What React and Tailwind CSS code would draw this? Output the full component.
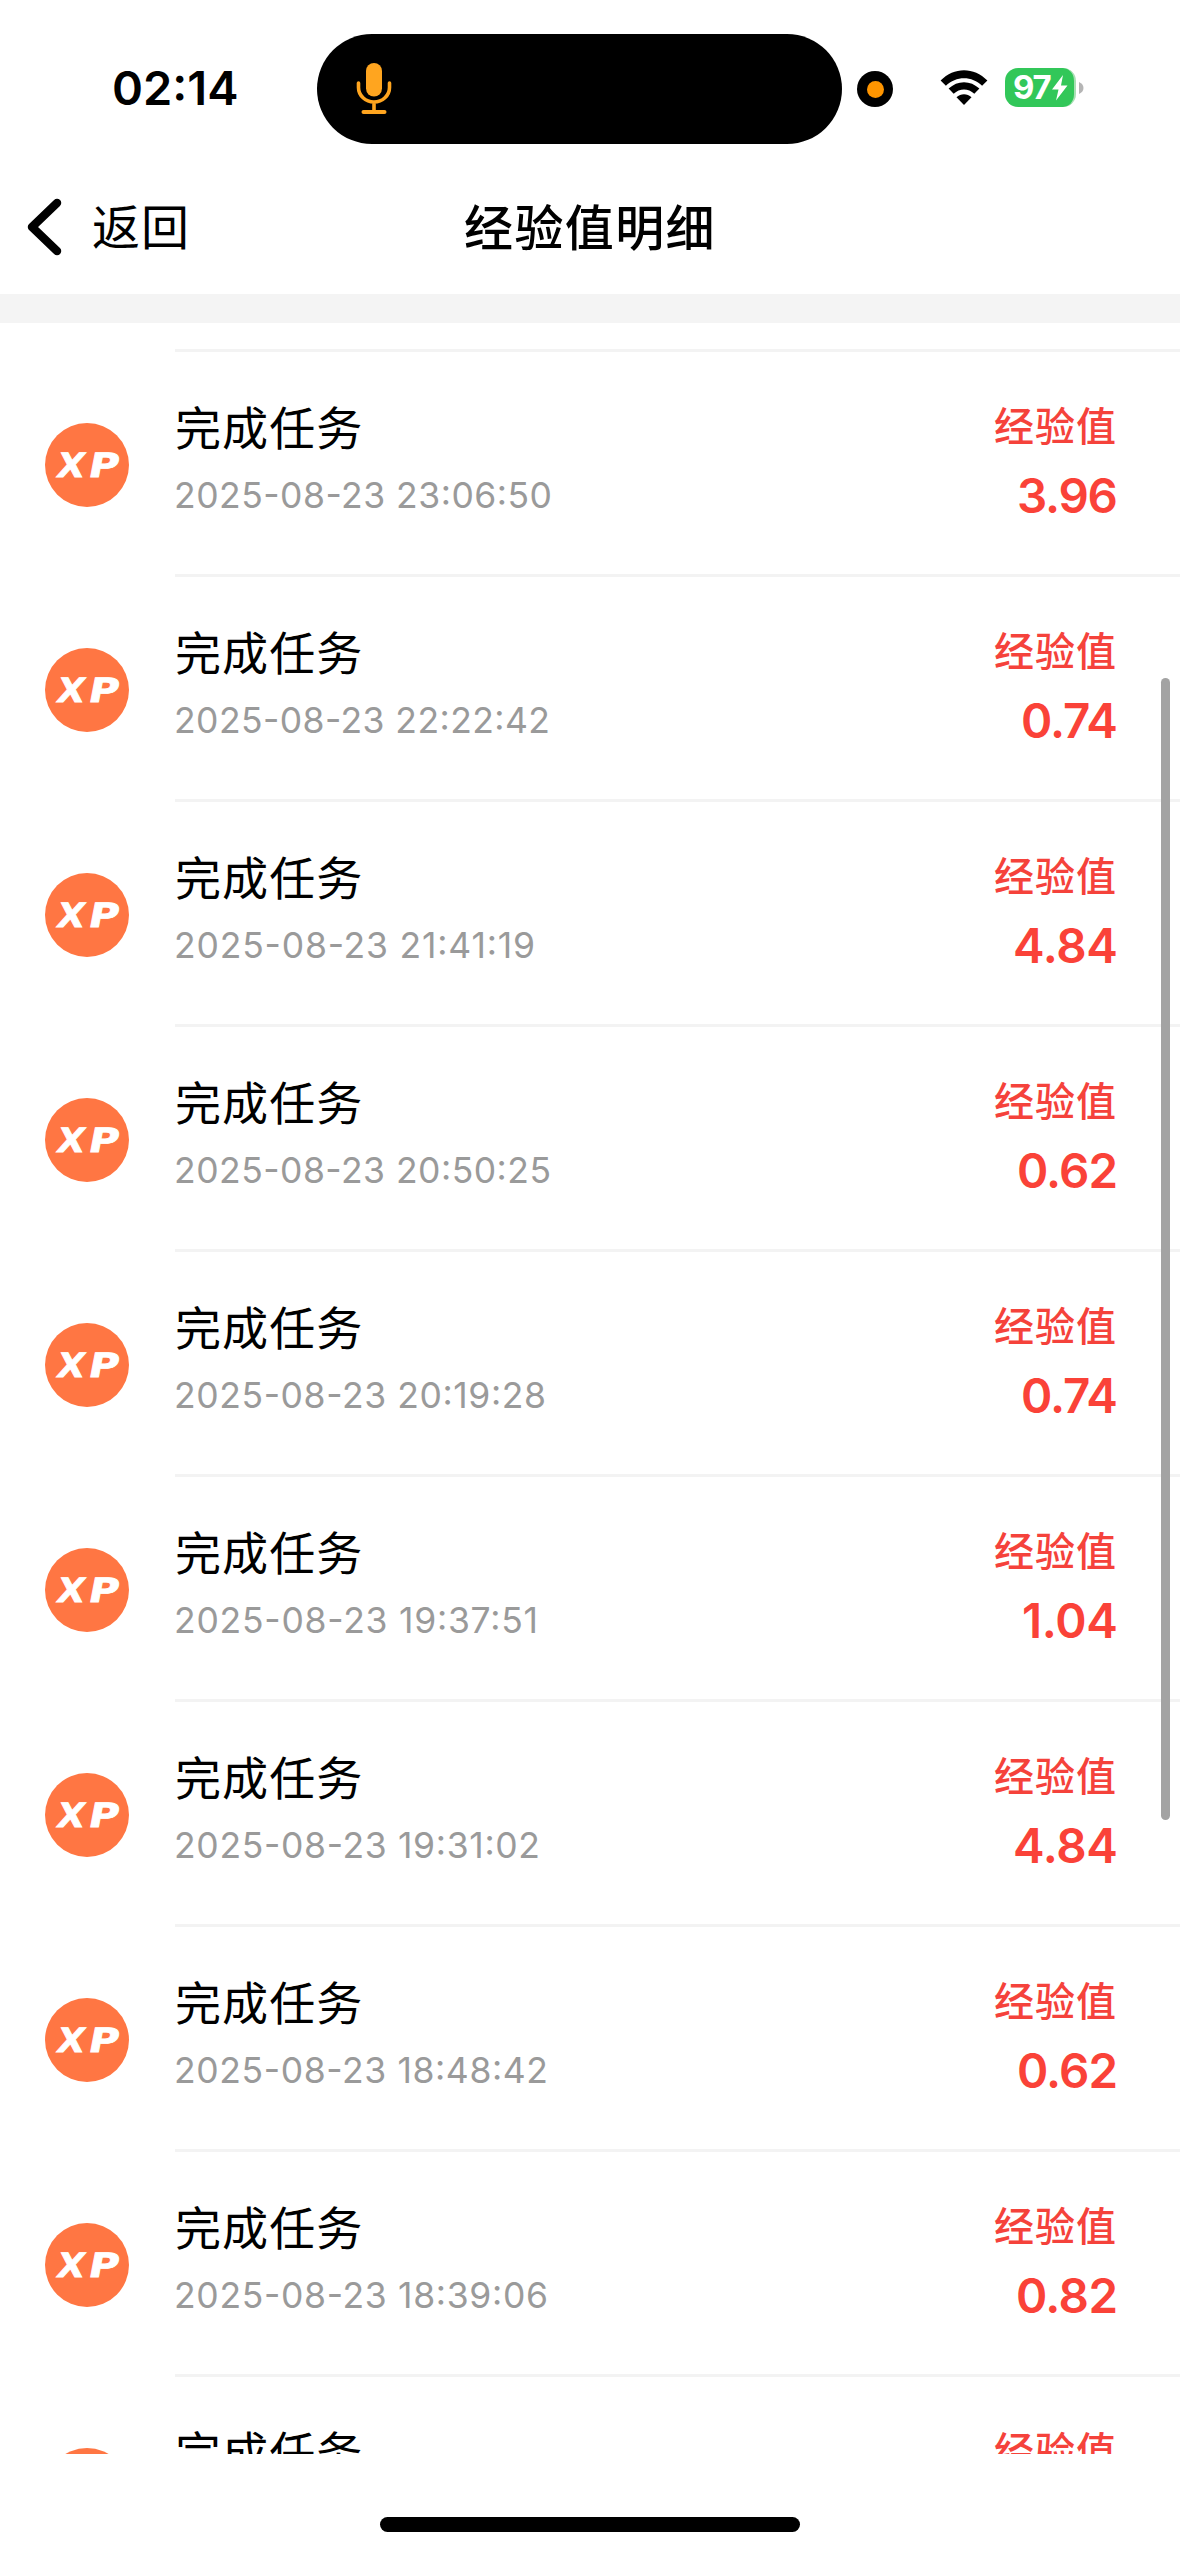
import React from "react";

const records = [
  { time: "2025-08-23 23:06:50", value: "3.96", w: 375, vw: 98 },
  { time: "2025-08-23 22:22:42", value: "0.74", w: 373, vw: 94 },
  { time: "2025-08-23 21:41:19", value: "4.84", w: 358, vw: 102 },
  { time: "2025-08-23 20:50:25", value: "0.62", w: 374, vw: 98 },
  { time: "2025-08-23 20:19:28", value: "0.74", w: 369, vw: 94 },
  { time: "2025-08-23 19:37:51", value: "1.04", w: 361, vw: 93 },
  { time: "2025-08-23 19:31:02", value: "4.84", w: 363, vw: 102 },
  { time: "2025-08-23 18:48:42", value: "0.62", w: 371, vw: 98 },
  { time: "2025-08-23 18:39:06", value: "0.82", w: 371, vw: 99 },
  { time: "2025-08-23 18:20:17", value: "0.74", w: 371, vw: 98 },
];

function MicIcon() {
  return (
    <svg className="ml-[39px] h-[54px] w-[36px]" viewBox="0 0 36 54" fill="none">
      <rect x="10" y="1" width="16" height="33.500" rx="8" fill="#ffa51f" />
      <path d="M2.500 21v4.500a15.500 14.500 0 0 0 31 0V21M18 40v9" stroke="#ffa51f" strokeWidth="3.600" strokeLinecap="round" />
      <path d="M7.500 50h21" stroke="#ffa51f" strokeWidth="4" strokeLinecap="round" />
    </svg>
  );
}

function WifiIcon() {
  return (
    <svg className="relative -top-px ml-[47px] mr-px h-[36px] w-[48px]" viewBox="0 0 48 36">
      <path d="M.6 10.6C14-3.2 34-3.2 47.4 10.6L42.1 15.8C32 5.6 16 5.6 5.9 15.8z" fill="#000" />
      <path d="M8.600 18.600C17.400 10 30.600 10 39.400 18.600L34.300 23.700C28.400 18 19.600 18 13.700 23.700z" fill="#000" />
      <path d="M16.500 27.200C20.800 23.100 27.200 23.100 31.500 27.200L24 35z" fill="#000" />
    </svg>
  );
}

function Battery() {
  return (
    <div className="mb-[3px] ml-4 flex items-center">
      <div className="flex h-[39px] w-[71px] items-center overflow-hidden rounded-[13px] border-r-2 border-[#a9dfb4] bg-[#32c759] pl-[8px]">
        <span className="text-[33px] font-bold leading-[39px] tracking-[-1.200px] text-white">97</span>
        <svg className="h-[26px] w-[17px] shrink-0" viewBox="0 0 17 26">
          <path d="M12 0L1 14.500H7.500L5 25.500L16.500 10.500H10z" fill="#fff" />
        </svg>
      </div>
      <svg className="ml-[3px] h-[12px] w-[5px]" viewBox="0 0 5 12">
        <path d="M0 0C6 2.500 6 9.500 0 12z" fill="#b5b5b5" />
      </svg>
    </div>
  );
}

function XpBadge() {
  return (
    <svg className="ml-[45px] mt-[74px] size-[84px] shrink-0" viewBox="0 0 84 84">
      <circle cx="42" cy="42" r="42" fill="#ff7643" />
      <g transform="translate(0 54) skewX(-11)" className="fill-white font-['DejaVu_Sans'] font-bold" stroke="#fff" strokeWidth="0.800">
        <text x="10.500" y="0" textLength="27" lengthAdjust="spacingAndGlyphs" fontSize="33.500">
          X
        </text>
        <text x="42" y="0" textLength="30" lengthAdjust="spacingAndGlyphs" fontSize="33.500">
          P
        </text>
      </g>
    </svg>
  );
}

function Row({ time, value, w, vw }) {
  return (
    <li className="flex h-[225px] shrink-0">
      <XpBadge />
      <div className="ml-[46px] flex flex-1 justify-between border-t-[3px] border-[#f3f3f3]">
        <div className="pt-[44px]">
          <div className="h-[64px] whitespace-nowrap text-[46px] leading-[64px] tracking-[1.100px] text-black">完成任务</div>
          <svg className="mt-[6px] h-[58px] w-[400px]" viewBox="0 0 400 58">
            <text x="-1" y="42" fontSize="35.500" textLength={w + 3} className="fill-[#9a9a9a]">
              {time}
            </text>
          </svg>
        </div>
        <div className="flex flex-col items-end pr-[60px] pt-[45px]">
          <div className="mr-[3px] h-[60px] whitespace-nowrap text-[40px] font-medium leading-[60px] tracking-[1px] text-[#f5423b]">经验值</div>
          <svg className="h-[74px] w-[125px]" viewBox="0 0 125 74">
            <text x={120 - vw} y="55.500" fontSize="47.500" textLength={vw + 3} className="fill-[#fa4238] font-semibold">
              {value}
            </text>
          </svg>
        </div>
      </div>
    </li>
  );
}

export default function App() {
  return (
    <div className="relative flex h-[2556px] w-[1180px] flex-col overflow-hidden bg-white font-['Inter','Noto_Sans_CJK_SC',sans-serif] text-black">
      <div className="flex h-[178px] shrink-0 items-center">
        <div className="mb-[3px] ml-[112px] w-[205px] text-[47px] font-semibold leading-none">02:14</div>
        <div className="flex h-[110px] w-[525px] items-center rounded-full bg-black">
          <MicIcon />
        </div>
        <div className="ml-[15px] flex size-[36px] items-center justify-center rounded-full bg-black">
          <div className="size-[17px] rounded-full bg-[#ff9500]" />
        </div>
        <WifiIcon />
        <Battery />
      </div>

      <header className="grid h-[116px] shrink-0 grid-cols-[1fr_auto_1fr] items-start">
        <div className="flex items-center pl-[26px] pt-[17px]">
          <svg className="h-[64px] w-[38px]" viewBox="0 0 38 64" fill="none">
            <path d="M31 8L6 32L31 56" stroke="#000" strokeWidth="8.500" strokeLinecap="round" strokeLinejoin="round" />
          </svg>
          <span className="ml-[28px] pt-[2px] text-[48px] leading-[62px] tracking-[1px]">返回</span>
        </div>
        <h1 className="pt-[19px] text-[49px] font-medium leading-[64px] tracking-[1.400px]">经验值明细</h1>
      </header>

      <div className="h-[29px] shrink-0 bg-[#f4f4f4]" />

      <ul className="flex h-[2131px] shrink-0 flex-col overflow-hidden pt-[26px]">
        {records.map((r) => (
          <Row key={r.time} {...r} />
        ))}
      </ul>

      <div className="mx-auto mt-[63px] h-[15px] w-[420px] rounded-full bg-black" />

      <div className="absolute left-[1161px] top-[678px] h-[1142px] w-[9px] rounded-full bg-[#a3a3a3]" />
    </div>
  );
}
